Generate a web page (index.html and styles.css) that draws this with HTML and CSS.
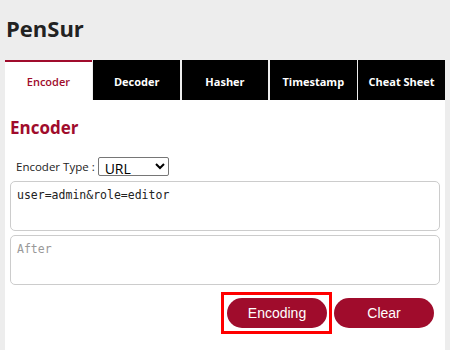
FILE: index.html
```html
<!DOCTYPE html>
<html lang="en">

<head>
    <meta charset="UTF-8">
    <meta name="viewport" content="width=device-width, initial-scale=1.0">
    <title>PenSur</title>
    <link rel="stylesheet" href="styles.css">
</head>

<body>
    <div class="page">
        <h1 class="brand">PenSur</h1>

        <nav class="tabs">
            <button class="tab active">Encoder</button>
            <button class="tab">Decoder</button>
            <button class="tab">Hasher</button>
            <button class="tab">Timestamp</button>
            <button class="tab">Cheat Sheet</button>
        </nav>

        <section class="panel">
            <h2>Encoder</h2>

            <div class="type-row">
                <label for="encType">Encoder Type :</label>
                <select id="encType">
                    <option>URL</option>
                    <option>Base64</option>
                    <option>HTML</option>
                </select>
            </div>

            <textarea class="io">user=admin&amp;role=editor</textarea>
            <textarea class="io" placeholder="After"></textarea>

            <div class="actions">
                <span class="highlight"><button class="btn">Encoding</button></span>
                <button class="btn">Clear</button>
            </div>
        </section>
    </div>
</body>

</html>
```

FILE: styles.css
```css
html,
body {
    margin: 0;
    background: #ededed;
    font-family: 'Open Sans', sans-serif;
}

.page {
    padding: 0 5px;
}

.brand {
    margin: 0;
    height: 60px;
    padding: 12px 0 0 1px;
    box-sizing: border-box;
    font-size: 22px;
    line-height: 32px;
    color: #222;
}

/* Tabs */
.tabs {
    display: flex;
    gap: 1.5px;
}

.tab {
    flex: 1;
    height: 40px;
    border: none;
    border-top: 2px solid #000;
    background: #000;
    color: white;
    font-family: 'Open Sans', sans-serif;
    font-size: 11px;
    font-weight: bold;
    cursor: pointer;
}

.tab.active {
    background: white;
    color: #a00c2c;
    border-top-color: #a00c2c;
    font-weight: 600;
}

/* Panel */
.panel {
    background: white;
    padding: 16px 5px 20px 5px;
    display: flex;
    flex-direction: column;
}

.panel h2 {
    margin: 0;
    font-size: 17px;
    line-height: 24px;
    color: #a00c2c;
}

.type-row {
    display: flex;
    align-items: center;
    gap: 3px;
    margin: 17px 0 5px 6px;
    font-size: 11.5px;
    color: #222;
}

.type-row select {
    width: 71px;
    height: 19px;
    padding: 0 2px;
    font-family: 'Open Sans', sans-serif;
    font-size: 14px;
    border: 1px solid #767676;
    border-radius: 2px;
    background: white;
    color: #000;
}

.io {
    height: 50px;
    box-sizing: border-box;
    padding: 6px 6px;
    margin: 0 0 4px 0;
    border: 1px solid #ccc;
    border-radius: 5px;
    font-family: 'DejaVu Sans Mono', monospace;
    font-size: 11.5px;
    color: #222;
    resize: none;
}

.io::placeholder {
    color: #999;
}

.actions {
    display: flex;
    justify-content: flex-end;
    align-items: center;
    gap: 2px;
    margin: 3px 6px 0 0;
}

.btn {
    width: 100px;
    height: 30px;
    border: none;
    border-radius: 15px;
    background: #a00c2c;
    color: white;
    font-family: 'Liberation Sans', sans-serif;
    font-size: 14px;
    cursor: pointer;
}

.highlight {
    display: inline-flex;
    border: 3px solid #ff0000;
    padding: 3px 2px 3px 3px;
}
```
